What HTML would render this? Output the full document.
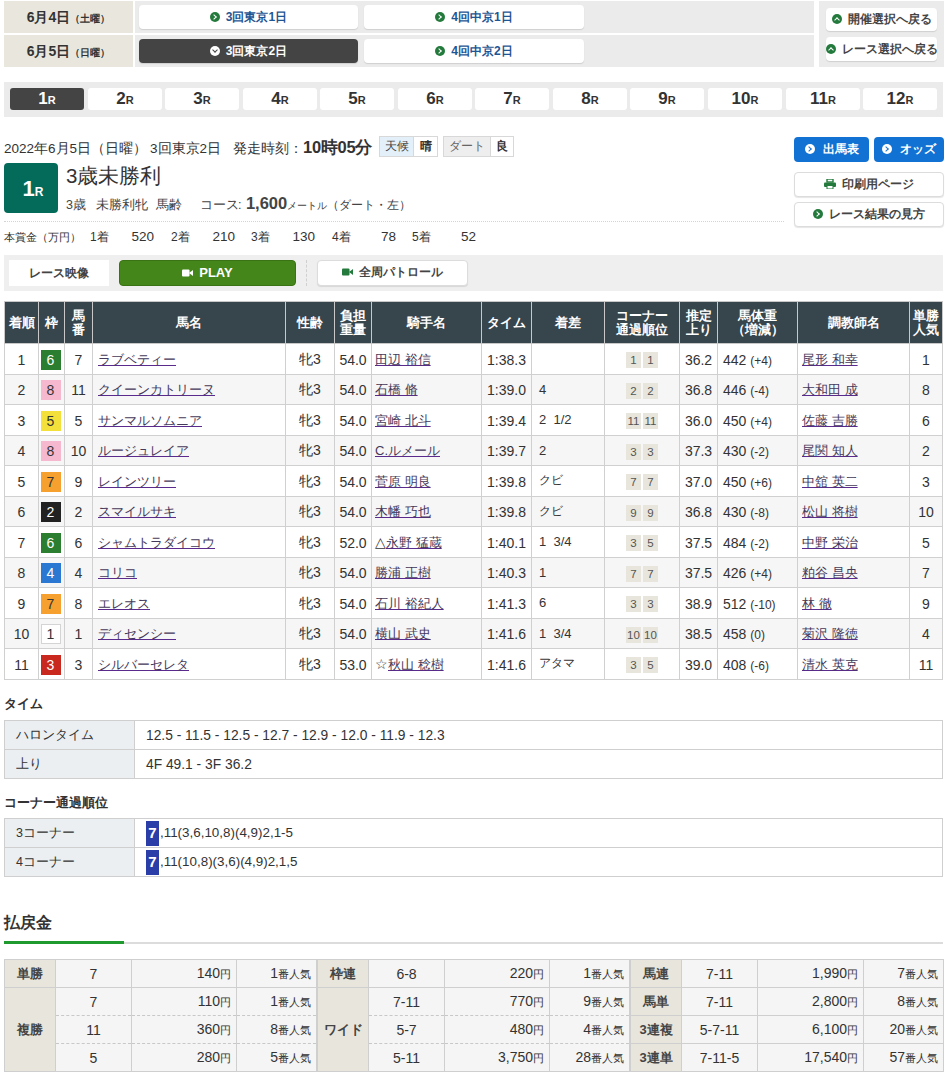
<!DOCTYPE html>
<html><head><meta charset="utf-8"><style>
*{box-sizing:border-box;margin:0;padding:0}
html,body{width:947px;height:1073px;overflow:hidden;background:#fff}
body{font-family:"Liberation Sans",sans-serif;color:#333;font-size:13px;position:relative}
.abs{position:absolute;white-space:nowrap}
.beige{background:#e9e7dd}
.grey{background:#ebebeb}
.wbtn{position:absolute;background:#fff;border-radius:4px;box-shadow:0 1px 1px rgba(0,0,0,.12);text-align:center;font-weight:bold;color:#1f5592;font-size:12px;white-space:nowrap}
.ico{display:inline-block;width:10px;height:10px;border-radius:50%;background:#237a3c;vertical-align:-1px;margin-right:6px;position:relative}
.ico:after{content:"";position:absolute;left:2px;top:3px;width:3px;height:3px;border-right:1.5px solid #fff;border-top:1.5px solid #fff;transform:rotate(45deg)}
.ico.up:after{left:3px;top:4px;transform:rotate(-45deg)}
.ico.dn:after{left:3px;top:2px;transform:rotate(135deg)}
.ico.w{background:#fff}
.ico.w:after{border-color:#444}
.ico.wb{background:#fff}
.ico.wb:after{border-color:#1a72d1}
.rbtn{position:absolute;top:88px;height:22px;width:74px;background:#fff;border-radius:3px;text-align:center;font-weight:bold;font-size:17px;line-height:21px;color:#333}
.rbtn small{font-size:11px}
.rbtn.on{background:#444;color:#fff}
.btnw{position:absolute;background:#fff;border:1px solid #dcdcdc;border-radius:4px;box-shadow:0 1px 1px rgba(0,0,0,.1);color:#444;font-weight:bold;font-size:12px;text-align:center;white-space:nowrap}
</style></head><body>
<div class="abs beige" style="left:4px;top:1px;width:129px;height:32px"></div>
<div class="abs beige" style="left:4px;top:35px;width:129px;height:32px"></div>
<div class="abs" style="left:4px;top:1px;width:129px;height:32px;line-height:32px;text-align:center;font-weight:bold;font-size:14px;color:#333">6月4日<span style="font-size:10px">（土曜）</span></div>
<div class="abs" style="left:4px;top:35px;width:129px;height:32px;line-height:32px;text-align:center;font-weight:bold;font-size:14px;color:#333">6月5日<span style="font-size:10px">（日曜）</span></div>
<div class="abs grey" style="left:135px;top:1px;width:679px;height:32px"></div>
<div class="abs grey" style="left:135px;top:35px;width:679px;height:32px"></div>
<div class="wbtn" style="left:139px;top:5px;width:219px;height:24px;line-height:24px"><span class="ico"></span>3回東京1日</div>
<div class="wbtn" style="left:364px;top:5px;width:220px;height:24px;line-height:24px"><span class="ico"></span>4回中京1日</div>
<div class="wbtn" style="left:139px;top:39px;width:219px;height:24px;line-height:24px;background:#444;color:#fff"><span class="ico dn w"></span>3回東京2日</div>
<div class="wbtn" style="left:364px;top:39px;width:220px;height:24px;line-height:24px"><span class="ico"></span>4回中京2日</div>
<div class="abs grey" style="left:819px;top:1px;width:125px;height:66px"></div>
<div class="wbtn" style="left:826px;top:8px;width:111px;height:23px;line-height:23px;color:#444;font-size:11.5px"><span class="ico up"></span>開催選択へ戻る</div>
<div class="wbtn" style="left:826px;top:37px;width:111px;height:24px;line-height:24px;color:#444;font-size:11.5px"><span class="ico up"></span>レース選択へ戻る</div>
<div class="abs grey" style="left:4px;top:82px;width:939px;height:35px"></div>
<div class="rbtn on" style="left:10px">1<small>R</small></div>
<div class="rbtn" style="left:88px">2<small>R</small></div>
<div class="rbtn" style="left:165px">3<small>R</small></div>
<div class="rbtn" style="left:243px">4<small>R</small></div>
<div class="rbtn" style="left:320px">5<small>R</small></div>
<div class="rbtn" style="left:398px">6<small>R</small></div>
<div class="rbtn" style="left:475px">7<small>R</small></div>
<div class="rbtn" style="left:553px">8<small>R</small></div>
<div class="rbtn" style="left:630px">9<small>R</small></div>
<div class="rbtn" style="left:708px">10<small>R</small></div>
<div class="rbtn" style="left:786px">11<small>R</small></div>
<div class="rbtn" style="left:863px">12<small>R</small></div>
<div class="abs" style="left:4px;top:137px;font-size:13.5px;color:#333;line-height:20px">2022年6月5日（日曜）<span style="margin-left:3px">3回東京2日</span><span style="margin-left:12px">発走時刻：</span><b style="font-size:16.5px;letter-spacing:-0.3px">10時05分</b></div>
<div style="position:absolute;top:136px;height:21px;border:1px solid #d8d8d8;font-size:12px;line-height:19px;text-align:center;white-space:nowrap;left:379px;width:35px;background:#e3f0fa;color:#444">天候</div>
<div style="position:absolute;top:136px;height:21px;border:1px solid #d8d8d8;font-size:12px;line-height:19px;text-align:center;white-space:nowrap;left:413px;width:25px;background:#fff;font-weight:bold">晴</div>
<div style="position:absolute;top:136px;height:21px;border:1px solid #d8d8d8;font-size:12px;line-height:19px;text-align:center;white-space:nowrap;left:443px;width:48px;background:#eeeeee;color:#666">ダート</div>
<div style="position:absolute;top:136px;height:21px;border:1px solid #d8d8d8;font-size:12px;line-height:19px;text-align:center;white-space:nowrap;left:490px;width:24px;background:#fff;font-weight:bold">良</div>
<div class="abs" style="left:4px;top:163px;width:54px;height:50px;background:#046b5b;border-radius:4px;color:#fff;text-align:center;font-weight:bold;font-size:22px;line-height:52px;padding-left:4px">1<small style="font-size:12px">R</small></div>
<div class="abs" style="left:66px;top:163px;font-size:20.5px;line-height:26px;color:#333">3歳未勝利</div>
<div class="abs" style="left:66px;top:193px;font-size:12.5px;line-height:20px;color:#444">3歳<span style="margin-left:10px">未勝利牝</span><span style="margin-left:8px">馬齢</span><span style="margin-left:18px">コース</span><span style="margin:0 1px 0 -1px">:</span> <b style="font-size:16.5px">1,600</b><span style="font-size:10px">メートル</span><span style="font-size:12px">（ダート・左）</span></div>
<div class="abs" style="left:4px;top:221px;width:780px;height:0;border-top:1px dotted #d4d4d4"></div>
<div class="abs" style="left:4px;top:228px;font-size:10.5px;line-height:18px;color:#333">本賞金（万円）</div>
<div class="abs" style="left:90px;top:228px;font-size:12px;line-height:18px">1着</div>
<div class="abs" style="left:118px;top:228px;width:36px;text-align:right;font-size:13.5px;line-height:18px">520</div>
<div class="abs" style="left:171px;top:228px;font-size:12px;line-height:18px">2着</div>
<div class="abs" style="left:199px;top:228px;width:36px;text-align:right;font-size:13.5px;line-height:18px">210</div>
<div class="abs" style="left:251px;top:228px;font-size:12px;line-height:18px">3着</div>
<div class="abs" style="left:279px;top:228px;width:36px;text-align:right;font-size:13.5px;line-height:18px">130</div>
<div class="abs" style="left:332px;top:228px;font-size:12px;line-height:18px">4着</div>
<div class="abs" style="left:360px;top:228px;width:36px;text-align:right;font-size:13.5px;line-height:18px">78</div>
<div class="abs" style="left:412px;top:228px;font-size:12px;line-height:18px">5着</div>
<div class="abs" style="left:440px;top:228px;width:36px;text-align:right;font-size:13.5px;line-height:18px">52</div>
<div style="position:absolute;top:137px;height:25px;background:#1a72d1;border-radius:4px;color:#fff;font-weight:bold;font-size:12px;line-height:25px;text-align:center;white-space:nowrap;background:#1272d3;left:794px;width:75px"><span class="ico wb" style="margin-right:8px"></span>出馬表</div>
<div style="position:absolute;top:137px;height:25px;background:#1a72d1;border-radius:4px;color:#fff;font-weight:bold;font-size:12px;line-height:25px;text-align:center;white-space:nowrap;background:#1272d3;left:874px;width:70px"><span class="ico wb" style="margin-right:8px"></span>オッズ</div>
<div class="btnw" style="left:794px;top:172px;width:150px;height:25px;line-height:23px"><svg width="12" height="10" viewBox="0 0 12 10" style="vertical-align:-1px;margin-right:6px"><rect x="3" y="0" width="6" height="3" fill="none" stroke="#237a3c" stroke-width="1.4"/><rect x="0" y="3.5" width="12" height="4.5" rx="1" fill="#237a3c"/><rect x="3" y="6.5" width="6" height="3.5" fill="#fff" stroke="#237a3c" stroke-width="1"/></svg>印刷用ページ</div>
<div class="btnw" style="left:794px;top:202px;width:150px;height:25px;line-height:23px"><span class="ico"></span>レース結果の見方</div>
<div class="abs" style="left:4px;top:255px;width:939px;height:36px;background:#efefef"></div>
<div class="abs" style="left:9px;top:260px;width:100px;height:26px;background:#fff;font-weight:bold;font-size:12px;line-height:26px;text-align:center;color:#444">レース映像</div>
<div class="abs" style="left:119px;top:260px;width:177px;height:26px;background:#45861a;border:1px solid #3a7314;border-radius:4px;color:#fff;font-weight:bold;font-size:13px;line-height:23px;text-align:center"><svg width="11" height="8" viewBox="0 0 11 8" style="vertical-align:0px;margin-right:6px"><rect x="0" y="0.5" width="7.5" height="7" rx="1" fill="#fff"/><path d="M7 4 L11 1 L11 7 Z" fill="#fff"/></svg>PLAY</div>
<div class="abs" style="left:306px;top:260px;height:26px;border-left:1px dashed #d0d0d0"></div>
<div class="btnw" style="left:317px;top:260px;width:151px;height:26px;line-height:23px"><span style="font-size:11.5px"><svg width="11" height="8" viewBox="0 0 11 8" style="vertical-align:0px;margin-right:6px"><rect x="0" y="0.5" width="7.5" height="7" rx="1" fill="#237a3c"/><path d="M7 4 L11 1 L11 7 Z" fill="#237a3c"/></svg>全周パトロール</span></div>
<style>
table.res{position:absolute;left:4px;top:301px;width:938px;border-collapse:collapse;table-layout:fixed;font-size:14px;color:#333}
table.res th{background:#37454d;color:#fff;font-weight:bold;font-size:12.5px;line-height:14px;height:42px;border:1px solid #c8c8c8;text-align:center;padding:0;padding-top:1px}
table.res th:first-child{border-left:1px solid #c8c8c8}
table.res th:last-child{border-right:1px solid #c8c8c8}
table.res td{border:1px solid #d0d0d0;height:30.5px;padding:0;white-space:nowrap;overflow:hidden}
table.res tr:nth-child(odd) td{background:#f6f6f6}
table.res td.c{text-align:center}
table.res td.l{padding-left:5px}
table.res td{padding-top:2px}
table.res a{color:#45395a;text-decoration:underline;text-decoration-color:#5a2a8c;font-size:13px}
.wk{display:inline-block;width:20px;height:20px;line-height:20px;text-align:center;font-size:14px;position:relative;top:0px;left:-1px}
.cn{display:inline-block;min-width:15px;padding:0 1px;height:16px;line-height:16px;background:#e8e6dc;font-size:11.5px;text-align:center;margin:0 1px;color:#555;position:relative;top:0px}
.sm{font-size:12px}
</style>
<table class="res"><colgroup><col style="width:34px"><col style="width:26px"><col style="width:28px"><col style="width:193px"><col style="width:49px"><col style="width:37px"><col style="width:110px"><col style="width:50px"><col style="width:73px"><col style="width:75px"><col style="width:38px"><col style="width:80px"><col style="width:112px"><col style="width:33px"></colgroup>
<tr><th>着順</th><th>枠</th><th>馬<br>番</th><th>馬名</th><th>性齢</th><th>負担<br>重量</th><th>騎手名</th><th>タイム</th><th>着差</th><th>コーナー<br>通過順位</th><th>推定<br>上り</th><th>馬体重<br>（増減）</th><th>調教師名</th><th>単勝<br>人気</th></tr>
<tr><td class="c">1</td><td class="c"><span class="wk" style="background:#2b7d2f;color:#fff;border:none;line-height:20px">6</span></td><td class="c">7</td><td class="l"><a>ラブベティー</a></td><td class="c">牝3</td><td class="c">54.0</td><td class="l" style="padding-left:3px"><a>田辺 裕信</a></td><td class="c">1:38.3</td><td class="l sm" style="padding-left:7px;font-size:13px;padding-top:0"></td><td class="c"><span class="cn">1</span><span class="cn">1</span></td><td class="c">36.2</td><td class="l">442 <span class="sm">(+4)</span></td><td class="l" style="padding-left:4px"><a>尾形 和幸</a></td><td class="c">1</td></tr>
<tr><td class="c">2</td><td class="c"><span class="wk" style="background:#f6b8cf;color:#333;border:none;line-height:20px">8</span></td><td class="c">11</td><td class="l"><a>クイーンカトリーヌ</a></td><td class="c">牝3</td><td class="c">54.0</td><td class="l" style="padding-left:3px"><a>石橋 脩</a></td><td class="c">1:39.0</td><td class="l sm" style="padding-left:7px;font-size:13px;padding-top:0">4</td><td class="c"><span class="cn">2</span><span class="cn">2</span></td><td class="c">36.8</td><td class="l">446 <span class="sm">(-4)</span></td><td class="l" style="padding-left:4px"><a>大和田 成</a></td><td class="c">8</td></tr>
<tr><td class="c">3</td><td class="c"><span class="wk" style="background:#f4e03b;color:#333;border:none;line-height:20px">5</span></td><td class="c">5</td><td class="l"><a>サンマルソムニア</a></td><td class="c">牝3</td><td class="c">54.0</td><td class="l" style="padding-left:3px"><a>宮崎 北斗</a></td><td class="c">1:39.4</td><td class="l sm" style="padding-left:7px;font-size:13px;padding-top:0">2&nbsp;&nbsp;1/2</td><td class="c"><span class="cn">11</span><span class="cn">11</span></td><td class="c">36.0</td><td class="l">450 <span class="sm">(+4)</span></td><td class="l" style="padding-left:4px"><a>佐藤 吉勝</a></td><td class="c">6</td></tr>
<tr><td class="c">4</td><td class="c"><span class="wk" style="background:#f6b8cf;color:#333;border:none;line-height:20px">8</span></td><td class="c">10</td><td class="l"><a>ルージュレイア</a></td><td class="c">牝3</td><td class="c">54.0</td><td class="l" style="padding-left:3px"><a>C.ルメール</a></td><td class="c">1:39.7</td><td class="l sm" style="padding-left:7px;font-size:13px;padding-top:0">2</td><td class="c"><span class="cn">3</span><span class="cn">3</span></td><td class="c">37.3</td><td class="l">430 <span class="sm">(-2)</span></td><td class="l" style="padding-left:4px"><a>尾関 知人</a></td><td class="c">2</td></tr>
<tr><td class="c">5</td><td class="c"><span class="wk" style="background:#f5a02f;color:#333;border:none;line-height:20px">7</span></td><td class="c">9</td><td class="l"><a>レインツリー</a></td><td class="c">牝3</td><td class="c">54.0</td><td class="l" style="padding-left:3px"><a>菅原 明良</a></td><td class="c">1:39.8</td><td class="l sm" style="padding-left:7px;font-size:13px;padding-top:0"><span style="font-size:12px">クビ</span></td><td class="c"><span class="cn">7</span><span class="cn">7</span></td><td class="c">37.0</td><td class="l">450 <span class="sm">(+6)</span></td><td class="l" style="padding-left:4px"><a>中舘 英二</a></td><td class="c">3</td></tr>
<tr><td class="c">6</td><td class="c"><span class="wk" style="background:#222;color:#fff;border:none;line-height:20px">2</span></td><td class="c">2</td><td class="l"><a>スマイルサキ</a></td><td class="c">牝3</td><td class="c">54.0</td><td class="l" style="padding-left:3px"><a>木幡 巧也</a></td><td class="c">1:39.8</td><td class="l sm" style="padding-left:7px;font-size:13px;padding-top:0"><span style="font-size:12px">クビ</span></td><td class="c"><span class="cn">9</span><span class="cn">9</span></td><td class="c">36.8</td><td class="l">430 <span class="sm">(-8)</span></td><td class="l" style="padding-left:4px"><a>松山 将樹</a></td><td class="c">10</td></tr>
<tr><td class="c">7</td><td class="c"><span class="wk" style="background:#2b7d2f;color:#fff;border:none;line-height:20px">6</span></td><td class="c">6</td><td class="l"><a>シャムトラダイコウ</a></td><td class="c">牝3</td><td class="c">52.0</td><td class="l" style="padding-left:3px">△<a>永野 猛蔵</a></td><td class="c">1:40.1</td><td class="l sm" style="padding-left:7px;font-size:13px;padding-top:0">1&nbsp;&nbsp;3/4</td><td class="c"><span class="cn">3</span><span class="cn">5</span></td><td class="c">37.5</td><td class="l">484 <span class="sm">(-2)</span></td><td class="l" style="padding-left:4px"><a>中野 栄治</a></td><td class="c">5</td></tr>
<tr><td class="c">8</td><td class="c"><span class="wk" style="background:#2a78d2;color:#fff;border:none;line-height:20px">4</span></td><td class="c">4</td><td class="l"><a>コリコ</a></td><td class="c">牝3</td><td class="c">54.0</td><td class="l" style="padding-left:3px"><a>勝浦 正樹</a></td><td class="c">1:40.3</td><td class="l sm" style="padding-left:7px;font-size:13px;padding-top:0">1</td><td class="c"><span class="cn">7</span><span class="cn">7</span></td><td class="c">37.5</td><td class="l">426 <span class="sm">(+4)</span></td><td class="l" style="padding-left:4px"><a>粕谷 昌央</a></td><td class="c">7</td></tr>
<tr><td class="c">9</td><td class="c"><span class="wk" style="background:#f5a02f;color:#333;border:none;line-height:20px">7</span></td><td class="c">8</td><td class="l"><a>エレオス</a></td><td class="c">牝3</td><td class="c">54.0</td><td class="l" style="padding-left:3px"><a>石川 裕紀人</a></td><td class="c">1:41.3</td><td class="l sm" style="padding-left:7px;font-size:13px;padding-top:0">6</td><td class="c"><span class="cn">3</span><span class="cn">3</span></td><td class="c">38.9</td><td class="l">512 <span class="sm">(-10)</span></td><td class="l" style="padding-left:4px"><a>林 徹</a></td><td class="c">9</td></tr>
<tr><td class="c">10</td><td class="c"><span class="wk" style="background:#fff;color:#333;border:1px solid #d4d4d4;line-height:18px">1</span></td><td class="c">1</td><td class="l"><a>ディセンシー</a></td><td class="c">牝3</td><td class="c">54.0</td><td class="l" style="padding-left:3px"><a>横山 武史</a></td><td class="c">1:41.6</td><td class="l sm" style="padding-left:7px;font-size:13px;padding-top:0">1&nbsp;&nbsp;3/4</td><td class="c"><span class="cn">10</span><span class="cn">10</span></td><td class="c">38.5</td><td class="l">458 <span class="sm">(0)</span></td><td class="l" style="padding-left:4px"><a>菊沢 隆徳</a></td><td class="c">4</td></tr>
<tr><td class="c">11</td><td class="c"><span class="wk" style="background:#c9281f;color:#fff;border:none;line-height:20px">3</span></td><td class="c">3</td><td class="l"><a>シルバーセレタ</a></td><td class="c">牝3</td><td class="c">53.0</td><td class="l" style="padding-left:3px">☆<a>秋山 稔樹</a></td><td class="c">1:41.6</td><td class="l sm" style="padding-left:7px;font-size:13px;padding-top:0"><span style="font-size:12px">アタマ</span></td><td class="c"><span class="cn">3</span><span class="cn">5</span></td><td class="c">39.0</td><td class="l">408 <span class="sm">(-6)</span></td><td class="l" style="padding-left:4px"><a>清水 英克</a></td><td class="c">11</td></tr>
</table>
<style>
.h3{position:absolute;left:4px;font-weight:bold;font-size:13px;color:#333;line-height:18px;white-space:nowrap}
table.tm{position:absolute;left:4px;width:939px;border-collapse:collapse;table-layout:fixed;font-size:14px;color:#333}
table.tm th{background:#eceff2;font-weight:normal;text-align:left;padding-left:11px;border:1px solid #cfcfcf;height:29px;white-space:nowrap;font-size:12.5px}
table.tm td{border:1px solid #cfcfcf;padding-left:11px;height:29px;white-space:nowrap;font-size:13.8px}
table.tm.cr td{font-size:13.4px}
.b7{display:inline-block;width:13px;height:25px;line-height:24px;background:#2b3da6;color:#fff;font-weight:bold;text-align:center;font-size:15px;vertical-align:middle;margin-right:1px}
</style>
<div class="h3" style="top:695px">タイム</div>
<table class="tm" style="top:720px"><colgroup><col style="width:130px"><col></colgroup><tr><th>ハロンタイム</th><td>12.5 - 11.5 - 12.5 - 12.7 - 12.9 - 12.0 - 11.9 - 12.3</td></tr><tr><th>上り</th><td>4F 49.1 - 3F 36.2</td></tr></table>
<div class="h3" style="top:794px">コーナー通過順位</div>
<table class="tm cr" style="top:818px"><colgroup><col style="width:130px"><col></colgroup><tr><th>3コーナー</th><td><span class="b7">7</span>,11(3,6,10,8)(4,9)2,1-5</td></tr><tr><th>4コーナー</th><td><span class="b7">7</span>,11(10,8)(3,6)(4,9)2,1,5</td></tr></table>
<style>
table.po{position:absolute;top:959px;width:313px;border-collapse:collapse;table-layout:fixed;font-size:14px;color:#333}
table.po th{background:#e8e6dc;font-weight:bold;font-size:13px;border:1px solid #cfcfcf;height:28px;text-align:center;color:#444}
table.po td{background:#f5f5f5;border:1px solid #cfcfcf;height:28px;white-space:nowrap}
table.po tr.d td{border-top:1px dashed #c8c8c8}
table.po tr.db td{border-bottom:1px dashed #c8c8c8}
table.po td.c{text-align:center}
table.po td.r{text-align:right;padding-right:5px}
table.po td.r2{text-align:right;padding-right:5px}
table.po small{font-size:11px}
</style>
<div class="abs" style="left:4px;top:912px;font-weight:bold;font-size:16px;line-height:22px;color:#333">払戻金</div>
<div class="abs" style="left:4px;top:942px;width:939px;height:2px;background:#dcdcdc"></div>
<div class="abs" style="left:4px;top:941px;width:120px;height:3px;background:#1e9a2e"></div>
<table class="po" style="left:4px;width:312px"><colgroup><col style="width:51px"><col style="width:76px"><col style="width:105px"><col style="width:80px"></colgroup><tr class=""><th rowspan="1">単勝</th><td class="c">7</td><td class="r">140<small>円</small></td><td class="r2">1<small>番人気</small></td></tr><tr class="db"><th rowspan="3">複勝</th><td class="c">7</td><td class="r">110<small>円</small></td><td class="r2">1<small>番人気</small></td></tr><tr class="d db"><td class="c">11</td><td class="r">360<small>円</small></td><td class="r2">8<small>番人気</small></td></tr><tr class="d"><td class="c">5</td><td class="r">280<small>円</small></td><td class="r2">5<small>番人気</small></td></tr></table>
<table class="po" style="left:317px;width:312px"><colgroup><col style="width:51px"><col style="width:76px"><col style="width:105px"><col style="width:80px"></colgroup><tr class=""><th rowspan="1">枠連</th><td class="c">6-8</td><td class="r">220<small>円</small></td><td class="r2">1<small>番人気</small></td></tr><tr class="db"><th rowspan="3">ワイド</th><td class="c">7-11</td><td class="r">770<small>円</small></td><td class="r2">9<small>番人気</small></td></tr><tr class="d db"><td class="c">5-7</td><td class="r">480<small>円</small></td><td class="r2">4<small>番人気</small></td></tr><tr class="d"><td class="c">5-11</td><td class="r">3,750<small>円</small></td><td class="r2">28<small>番人気</small></td></tr></table>
<table class="po" style="left:630px;width:313px"><colgroup><col style="width:51px"><col style="width:76px"><col style="width:106px"><col style="width:80px"></colgroup><tr class=""><th rowspan="1">馬連</th><td class="c">7-11</td><td class="r">1,990<small>円</small></td><td class="r2">7<small>番人気</small></td></tr><tr class=""><th rowspan="1">馬単</th><td class="c">7-11</td><td class="r">2,800<small>円</small></td><td class="r2">8<small>番人気</small></td></tr><tr class=""><th rowspan="1">3連複</th><td class="c">5-7-11</td><td class="r">6,100<small>円</small></td><td class="r2">20<small>番人気</small></td></tr><tr class=""><th rowspan="1">3連単</th><td class="c">7-11-5</td><td class="r">17,540<small>円</small></td><td class="r2">57<small>番人気</small></td></tr></table>
</body></html>
